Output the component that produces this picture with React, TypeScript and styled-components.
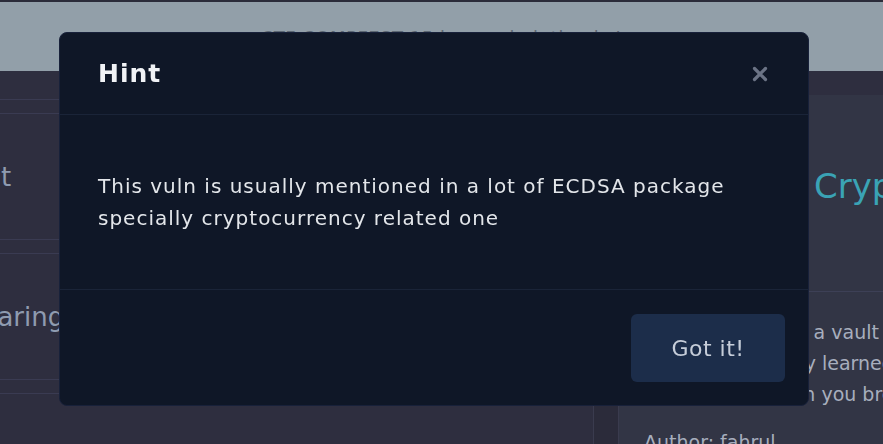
import React from 'react';
import styled, { createGlobalStyle } from 'styled-components';

const GlobalStyle = createGlobalStyle`
  html, body {
    margin: 0;
    padding: 0;
    background: #2e2e3f;
    overflow: hidden;
  }
  body {
    font-family: 'DejaVu Sans', 'Noto Sans', sans-serif;
  }
`;

const Page = styled.div`
  width: 883px;
  height: 444px;
  display: flex;
  flex-direction: column;
  background: #2e2e3f;
  border-top: 2px solid #2b2c3a;
  overflow: hidden;
`;

const Banner = styled.div`
  height: 69px;
  flex-shrink: 0;
  background: #929fa9;
  color: #5d6873;
  display: flex;
  align-items: center;
  justify-content: center;
  font-size: 18px;
  letter-spacing: 0.5px;
  padding-top: 2px;
  box-sizing: border-box;
`;

const Main = styled.div`
  flex: 1;
  display: grid;
  grid-template-columns: 594px 25px 1fr;
`;

const List = styled.div`
  display: flex;
  flex-direction: column;
  gap: 13px;
  border-right: 1px solid #3a3b4e;
`;

const ListHead = styled.div`
  height: 28px;
  flex-shrink: 0;
  border-bottom: 1px solid #3a3b52;
`;

const Item = styled.div`
  height: 125px;
  flex-shrink: 0;
  border-top: 1px solid #3a3b52;
  border-bottom: 1px solid #3a3b52;
  display: flex;
  align-items: center;
`;

const ItemName = styled.span<{ $shift: number }>`
  margin-left: ${(p) => p.$shift}px;
  font-size: 26px;
  color: #8f9bb0;
  white-space: nowrap;
`;

const Gutter = styled.div`
  background: #2b2b3a;
  border-right: 1px solid #3a3b4e;
`;

const Panel = styled.div`
  margin-top: 24px;
  background: #323545;
  display: flex;
  flex-direction: column;
`;

const PanelHead = styled.div`
  height: 197px;
  flex-shrink: 0;
  box-sizing: border-box;
  padding: 71px 0 0 195px;
  border-bottom: 1px solid #3d4056;
  font-size: 34px;
  line-height: 40px;
  color: #3aa3b5;
  white-space: nowrap;
`;

const PanelBody = styled.div`
  padding: 25px 0 0 25px;
  font-size: 19px;
  line-height: 31px;
  color: #a7aebd;
  white-space: nowrap;
`;

const Author = styled.div`
  margin-top: 17px;
`;

const Overlay = styled.div`
  position: fixed;
  inset: 0;
  padding: 32px 0 0 59px;
`;

const Modal = styled.div`
  width: 750px;
  height: 374px;
  box-sizing: border-box;
  background: #0f1727;
  border: 1px solid #18213a;
  border-radius: 8px;
  display: flex;
  flex-direction: column;
  overflow: hidden;
`;

const Header = styled.div`
  height: 82px;
  flex-shrink: 0;
  box-sizing: border-box;
  padding: 0 40px 0 38px;
  display: flex;
  align-items: center;
  justify-content: space-between;
  border-bottom: 1px solid #1a2438;
`;

const Title = styled.h2`
  margin: 0;
  font-size: 25px;
  font-weight: 700;
  color: #f1f3f6;
  letter-spacing: 1px;
`;

const Close = styled.button`
  background: none;
  border: none;
  padding: 0;
  display: flex;
  cursor: pointer;
`;

const Body = styled.div`
  height: 175px;
  flex-shrink: 0;
  box-sizing: border-box;
  padding: 0 38px;
  display: flex;
  align-items: center;
  border-bottom: 1px solid #1a2438;
`;

const Text = styled.p`
  margin: 0;
  font-size: 20px;
  line-height: 32px;
  color: #e3e6ea;
  letter-spacing: 1px;
  white-space: nowrap;
`;

const Footer = styled.div`
  flex: 1;
  display: flex;
  justify-content: flex-end;
  align-items: flex-start;
  padding: 24px 23px 0 0;
`;

const Button = styled.button`
  width: 154px;
  height: 68px;
  background: #1c2d4a;
  border: none;
  border-radius: 6px;
  color: #c6cdd9;
  font-family: inherit;
  font-size: 22px;
  letter-spacing: 0.5px;
  cursor: pointer;
`;

export default function App() {
  return (
    <>
      <GlobalStyle />
      <Page>
        <Banner>CTF COMPFEST 15 has ended, thanks!</Banner>
        <Main>
          <List>
            <ListHead />
            <Item>
              <ItemName $shift={-142}>Assignment</ItemName>
            </Item>
            <Item>
              <ItemName $shift={-91}>Key Sharing</ItemName>
            </Item>
            <Item>
              <ItemName $shift={16}>ambiguous</ItemName>
            </Item>
          </List>
          <Gutter />
          <Panel>
            <PanelHead>Cryptography</PanelHead>
            <PanelBody>
              <div>Somebody builds a vault</div>
              <div>which we recently learned</div>
              <div>in a hashing, then you break it</div>
              <Author>Author: fahrul</Author>
            </PanelBody>
          </Panel>
        </Main>
      </Page>
      <Overlay>
        <Modal>
          <Header>
            <Title>Hint</Title>
            <Close aria-label="close">
              <svg width="16" height="16" viewBox="0 0 16 16">
                <path d="M2.5 2.5 L13.5 13.5 M13.5 2.5 L2.5 13.5" stroke="#6b7385" strokeWidth="3.2" strokeLinecap="round" />
              </svg>
            </Close>
          </Header>
          <Body>
            <Text>
              This vuln is usually mentioned in a lot of ECDSA package
              <br />
              specially cryptocurrency related one
            </Text>
          </Body>
          <Footer>
            <Button>Got it!</Button>
          </Footer>
        </Modal>
      </Overlay>
    </>
  );
}
